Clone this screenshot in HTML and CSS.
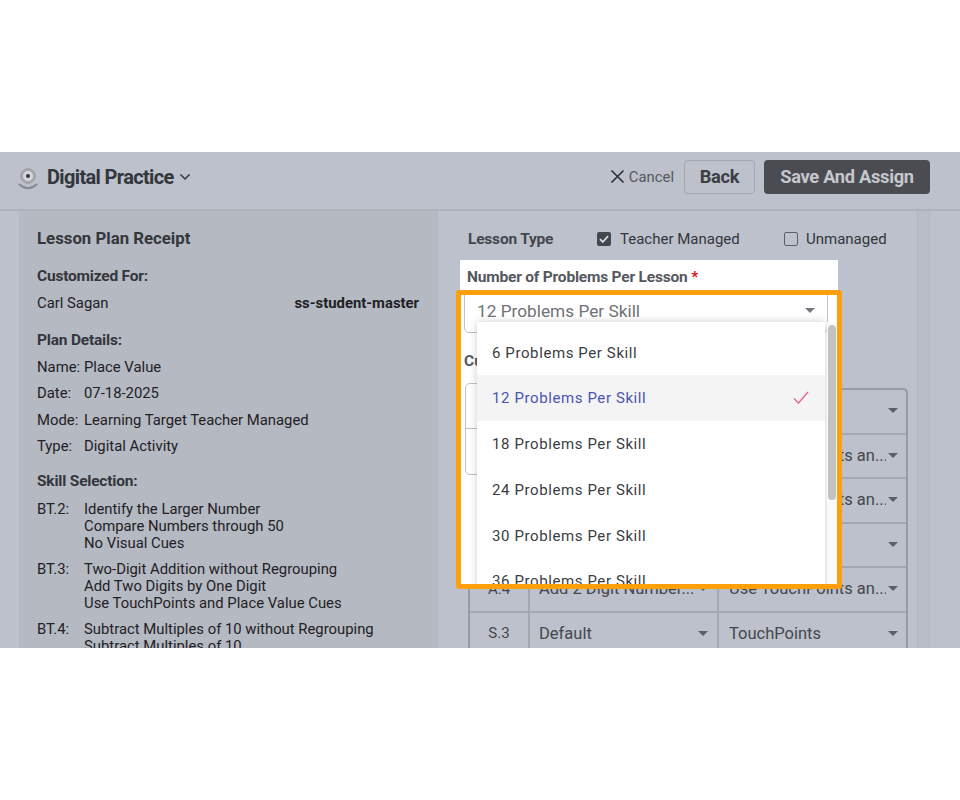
FILE: index.html
```html
<!DOCTYPE html>
<html lang="en">
<head>
<meta charset="utf-8">
<title>Digital Practice</title>
<link rel="stylesheet" href="styles.css">
</head>
<body>
<div class="screen">
  <header class="topbar">
    <div class="brand">
      <svg class="logo" width="22" height="26" viewBox="0 0 22 26"><circle cx="10" cy="12" r="7.2" fill="#a9acb2" stroke="#94979d" stroke-width="1"/><circle cx="10" cy="12" r="5" fill="#d4d6da"/><circle cx="10" cy="12" r="2" fill="#33363b"/><path d="M1.5 20.5Q10 28 18.5 20.5" fill="none" stroke="#85888e" stroke-width="2" stroke-linecap="round"/></svg>
      <span class="brand-name">Digital Practice</span>
      <svg width="12" height="8" viewBox="0 0 12 8"><path d="M1.5 1.5 6 6l4.5-4.5" fill="none" stroke="#33363b" stroke-width="1.5"/></svg>
    </div>
    <div class="actions">
      <span class="cancel"><svg width="15" height="15" viewBox="0 0 15 15"><path d="M1.5 1.5l12 12M13.5 1.5l-12 12" stroke="#2b2e33" stroke-width="1.6"/></svg>Cancel</span>
      <span class="btn-back">Back</span>
      <span class="btn-save">Save And Assign</span>
    </div>
  </header>
  <div class="body">
    <aside class="receipt">
      <h2 class="receipt-title">Lesson Plan Receipt</h2>
      <h3 class="sec">Customized For:</h3>
      <div class="cust"><span>Carl Sagan</span><b>ss-student-master</b></div>
      <h3 class="sec">Plan Details:</h3>
      <div class="kv"><span class="k">Name:</span><span>Place Value</span></div>
      <div class="kv"><span class="k">Date:</span><span>07-18-2025</span></div>
      <div class="kv"><span class="k">Mode:</span><span>Learning Target Teacher Managed</span></div>
      <div class="kv"><span class="k">Type:</span><span>Digital Activity</span></div>
      <h3 class="sec sec-skill">Skill Selection:</h3>
      <div class="skill"><span class="k">BT.2:</span><span>Identify the Larger Number<br>Compare Numbers through 50<br>No Visual Cues</span></div>
      <div class="skill"><span class="k">BT.3:</span><span>Two-Digit Addition without Regrouping<br>Add Two Digits by One Digit<br>Use TouchPoints and Place Value Cues</span></div>
      <div class="skill"><span class="k">BT.4:</span><span>Subtract Multiples of 10 without Regrouping<br>Subtract Multiples of 10</span></div>
    </aside>
    <main class="config">
      <div class="lesson-type">
        <span class="lt-label">Lesson Type</span>
        <span class="check check-a"><svg width="14" height="14" viewBox="0 0 14 14"><rect width="14" height="14" rx="2" fill="#44474d"/><path d="M3 7.2 5.8 10 11 4.2" fill="none" stroke="#d8dae0" stroke-width="1.8"/></svg>Teacher Managed</span>
        <span class="check"><span class="box"></span>Unmanaged</span>
      </div>
      <div class="grid">
        <div class="row"><span class="c1"></span><span class="c2"></span><span class="c3"><i class="txt"></i><i class="caret"></i></span></div>
        <div class="row"><span class="c1"></span><span class="c2"></span><span class="c3"><i class="txt">Use TouchPoints an...</i><i class="caret"></i></span></div>
        <div class="row"><span class="c1"></span><span class="c2"></span><span class="c3"><i class="txt">Use TouchPoints an...</i><i class="caret"></i></span></div>
        <div class="row"><span class="c1"></span><span class="c2"></span><span class="c3"><i class="txt">TouchPoints</i><i class="caret"></i></span></div>
        <div class="row"><span class="c1">A.4</span><span class="c2"><i class="txt">Add 2 Digit Number...</i><i class="caret"></i></span><span class="c3"><i class="txt">Use TouchPoints an...</i><i class="caret"></i></span></div>
        <div class="row"><span class="c1">S.3</span><span class="c2"><i class="txt">Default</i><i class="caret"></i></span><span class="c3"><i class="txt">TouchPoints</i><i class="caret"></i></span></div>
      </div>
    </main>
    <div class="gutter"></div>
  </div>
  <div class="spot-label"><span>Number of Problems Per Lesson <em>*</em></span></div>
  <div class="spot">
    <div class="select"><span>12 Problems Per Skill</span><i class="caret caret-sel"></i></div>
    <div class="cu-label">Cu</div>
    <div class="ghost-table"><div class="ghost-row"></div></div>
    <ul class="menu">
      <li>6 Problems Per Skill</li>
      <li class="on">12 Problems Per Skill<svg width="16" height="14" viewBox="0 0 16 14"><path d="M1 7.5 5.5 12 15 1" fill="none" stroke="#e8608a" stroke-width="1.2"/></svg></li>
      <li>18 Problems Per Skill</li>
      <li>24 Problems Per Skill</li>
      <li>30 Problems Per Skill</li>
      <li>36 Problems Per Skill</li>
    </ul>
    <div class="sbar"><div class="thumb"></div></div>
  </div>
</div>
</body>
</html>
```
FILE: styles.css
```css
* { box-sizing: border-box; }
html, body { margin: 0; background: #fff; }
body { padding-top: 152px; height: 800px; overflow: hidden; font-family: Roboto, sans-serif; color: #1f2125; font-size: 14.85px; }
.screen { position: relative; width: 960px; height: 496px; overflow: hidden; background: #bdc1cb; }

.topbar { height: 59px; display: flex; justify-content: space-between; align-items: center; padding: 0 30px 8px 18px; border-bottom: 2px solid #aeb2bb; }
.brand { display: flex; align-items: center; }
.logo { margin-right: 7px; }
.brand-name { font-size: 20px; font-weight: 700; color: #33363b; letter-spacing: -0.65px; margin-right: 5px; }
.actions { display: flex; align-items: center; }
.cancel { display: flex; align-items: center; gap: 4px; color: #55585e; font-size: 14.85px; margin-right: 10px; }
.btn-back { width: 71px; height: 34px; border: 1px solid #a3a7b0; border-radius: 4px; display: flex; align-items: center; justify-content: center; font-size: 18.3px; font-weight: 700; color: #3b3e44; letter-spacing: -0.3px; margin-right: 9px; }
.btn-save { width: 166px; height: 34px; background: #4a4c52; border-radius: 4px; display: flex; align-items: center; justify-content: center; font-size: 18.3px; font-weight: 700; color: #c4c7ce; letter-spacing: -0.3px; }

.body { display: flex; height: 437px; padding-left: 19px; }
.receipt { width: 419px; background: #b5b9c2; padding: 17px 18px 0 18px; line-height: 17px; border-right: 1px solid #b1b5be; }
.receipt-title { margin: 0 0 20px; font-size: 16.8px; line-height: 20px; font-weight: 700; color: #33363b; }
.sec { margin: 0 0 10px; font-size: 15.5px; line-height: 17px; font-weight: 700; color: #33363b; letter-spacing: -0.2px; }
.cust { display: flex; justify-content: space-between; margin-bottom: 20px; }
.kv { display: flex; margin-bottom: 9.4px; }
.k { width: 47px; flex: none; }
.sec-skill { margin-top: 18px; margin-bottom: 11px; }
.skill { display: flex; margin-bottom: 9px; }

.config { flex: none; width: 479px; padding: 19px 0 0 30px; }
.lesson-type { display: flex; align-items: center; height: 18px; }
.lt-label { font-size: 15.5px; font-weight: 700; color: #44474d; letter-spacing: -0.2px; width: 129px; }
.check { display: flex; align-items: center; gap: 8px; color: #33363b; font-size: 15px; }
.check-a { width: 187px; gap: 9px; }
.box { width: 14px; height: 14px; border: 1px solid #5c5f66; border-radius: 2px; }
.grid { margin-top: 140px; width: 440px; border: 2px solid #979ba4; border-radius: 5px 5px 0 0; border-bottom: 0; }
.row { display: grid; grid-template-columns: 60px 189px 1fr; height: 44.5px; border-bottom: 2px solid #a3a7b0; color: #44474d; font-size: 16.5px; }
.row > span { display: flex; align-items: center; min-width: 0; padding-bottom: 1px; }
.row .c1 { justify-content: center; border-right: 2px solid #a3a7b0; font-size: 15px; }
.row .c2 { border-right: 2px solid #a3a7b0; padding: 0 9px 1px 9px; }
.row .c3 { padding: 0 8px 1px 10px; }
.txt { flex: 1; font-style: normal; white-space: nowrap; overflow: hidden; }
.caret { flex: none; width: 0; height: 0; border: 5px solid transparent; border-top: 5px solid #5c5f66; border-bottom: 0; margin-left: 2px; }
.gutter { width: 13px; flex: none; margin-left: 0; background: #b9bdc7; border-left: 1px solid #b3b7c0; border-right: 1px solid #b3b7c0; }

.spot-label { position: absolute; left: 460px; top: 108px; width: 378px; height: 32px; background: #fff; padding: 9px 7px 0; font-size: 15.5px; font-weight: 700; color: #55585e; letter-spacing: -0.2px; line-height: 17px; }
.spot-label em { font-style: normal; color: #e0141c; }
.spot { position: absolute; left: 456px; top: 138px; width: 386px; height: 299px; border: 5px solid #ff9f0a; border-radius: 3px; background: #fff; overflow: hidden; }
.select { position: absolute; left: 3px; top: -5px; width: 364px; height: 43px; border: 1px solid #bfc2c8; border-radius: 5px; display: flex; align-items: center; justify-content: space-between; padding: 0 12px 2px 12px; color: #6f7278; font-size: 17.25px; }
.caret-sel { border-top-color: #74777d; }
.cu-label { position: absolute; left: 3px; top: 57px; font-weight: 700; color: #55585e; font-size: 15.5px; line-height: 18px; }
.ghost-table { position: absolute; left: 4px; top: 88px; width: 60px; height: 92px; border: 1px solid #bfc2c8; border-radius: 5px; }
.ghost-row { height: 45px; border-bottom: 1px solid #bfc2c8; }
.menu { position: absolute; left: 16px; top: 27px; width: 348px; height: 270px; margin: 0; padding: 7.7px 0 0; list-style: none; background: #fff; box-shadow: 0 0 8px rgba(0,0,0,.2); overflow: hidden; }
.menu li { height: 45.75px; display: flex; align-items: center; justify-content: space-between; padding: 0 16px 0 15px; font-size: 15px; letter-spacing: 0.6px; color: #3a3d42; }
.menu li.on { background: #f4f4f5; color: #4a55b0; }
.sbar { position: absolute; left: 366px; top: 27px; width: 10px; height: 270px; background: #fafafa; }
.thumb { margin: 3px 1px 0; width: 8px; height: 175px; border-radius: 4px; background: #c2c2c2; }
```
